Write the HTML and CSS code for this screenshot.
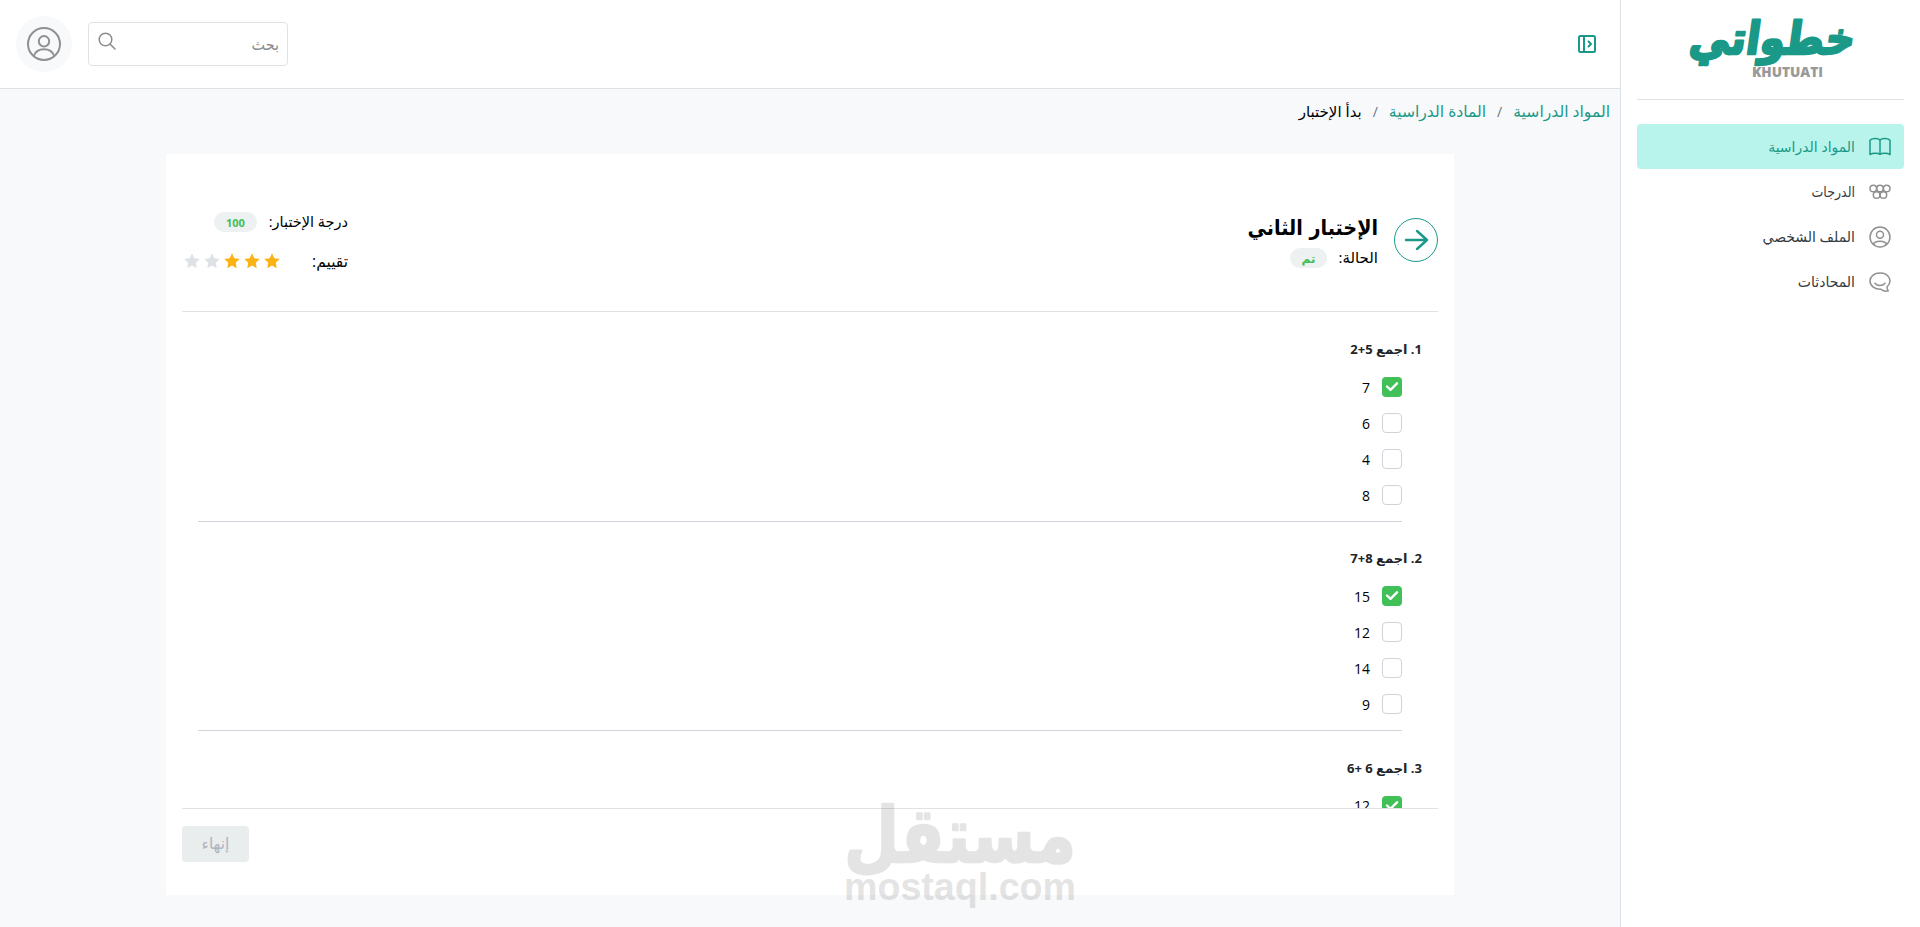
FILE: index.html
```
<!DOCTYPE html>
<html lang="ar" dir="rtl">
<head>
    <meta charset="UTF-8">
    <meta name="viewport" content="width=device-width, initial-scale=1.0">
    <title>خطواتي</title>
    <link rel="stylesheet" href="styles.css">
</head>
<body>
    <aside class="sidebar">
        <div class="brand">
            <svg class="logo" width="170" height="68" viewBox="0 0 170 68" direction="rtl">
                <text class="logo-ar" transform="translate(167 38) skewX(-8)" x="0" y="0" textLength="165" lengthAdjust="spacingAndGlyphs">خطواتي</text>
                <text class="logo-en" direction="ltr" x="66" y="61" textLength="71" lengthAdjust="spacingAndGlyphs">KHUTUATI</text>
            </svg>
        </div>
        <nav class="menu">
            <a class="menu-item active">
                <svg width="22" height="22" viewBox="0 0 22 22"><path d="M11 4.2C9.5 2.200 3.500 1.900 1 4.200V18.600C3.500 17 9 17 11 18.300C13 17 18.500 17 21 18.600V4.200C18.500 1.900 12.500 2.200 11 4.200V18.300"/></svg>
                <span>المواد الدراسية</span>
            </a>
            <a class="menu-item">
                <svg width="22" height="22" viewBox="0 0 22 22"><circle cx="4.300" cy="7.500" r="3.300"/><circle cx="11" cy="7.500" r="3.300"/><circle cx="17.700" cy="7.500" r="3.300"/><circle cx="7.600" cy="14" r="3.300"/><circle cx="14.400" cy="14" r="3.300"/></svg>
                <span class="narrow">الدرجات</span>
            </a>
            <a class="menu-item">
                <svg width="22" height="22" viewBox="0 0 22 22"><circle cx="11" cy="11" r="10"/><circle cx="11" cy="8.700" r="3.500"/><path d="M4.500 18.400C5.500 14.300 16.500 14.300 17.500 18.400"/></svg>
                <span>الملف الشخصي</span>
            </a>
            <a class="menu-item">
                <svg width="22" height="22" viewBox="0 0 22 22"><path d="M18 16C24 10 20 2 11 2C5 2 1 5.500 1 10C1 15 6 18.500 12 18.200C14 20 17 20.500 19.300 19.800C18.300 18.800 18 17.500 18 16Z"/><path d="M6 12.200C8.500 15.200 13.500 15.200 16 12.200"/></svg>
                <span>المحادثات</span>
            </a>
        </nav>
    </aside>

    <div class="page">
        <header class="topbar">
            <svg class="toggle" width="18" height="18" viewBox="0 0 18 18"><rect x="1" y="1" width="16" height="16" rx="1.500"/><path d="M6 1V17M10.500 6.500L13 9L10.500 11.500"/></svg>
            <div class="tools">
                <div class="search">
                    <span>بحث</span>
                    <svg width="18" height="18" viewBox="0 0 18 18"><circle cx="7.500" cy="7.500" r="6.300"/><path d="M12 12L17 17"/></svg>
                </div>
                <div class="avatar">
                    <svg width="34" height="34" viewBox="0 0 34 34"><circle cx="17" cy="17" r="16"/><circle cx="17" cy="14.300" r="5.200"/><path d="M7 28.500C10 20 24 20 27 28.500"/></svg>
                </div>
            </div>
        </header>

        <div class="breadcrumb">
            <a>المواد الدراسية</a>
            <i>/</i>
            <a>المادة الدراسية</a>
            <i>/</i>
            <b>بدأ الإختبار</b>
        </div>

        <main class="card">
            <div class="card-head">
                <div class="back">
                    <svg width="44" height="44" viewBox="0 0 44 44"><circle cx="22" cy="22" r="21.500"/><path d="M12 22H33M23 13L33 22L23 31"/></svg>
                </div>
                <div class="exam">
                    <h1>الإختبار الثاني</h1>
                    <div class="status"><span>الحالة:</span><em class="badge">تم</em></div>
                </div>
                <div class="result">
                    <div class="result-row"><span class="score-label">درجة الإختبار:</span><em class="badge score">100</em></div>
                    <div class="result-row">
                        <span class="rate-label">تقييم:</span>
                        <div class="stars">
                            <svg class="on" viewBox="0 0 16 16"><path d="M8 .3L10.300 5.200L15.700 5.900L11.800 9.700L12.700 15.200L8 12.600L3.300 15.200L4.200 9.700L.3 5.900L5.700 5.200Z"/></svg>
                            <svg class="on" viewBox="0 0 16 16"><path d="M8 .3L10.300 5.200L15.700 5.900L11.800 9.700L12.700 15.200L8 12.600L3.300 15.200L4.200 9.700L.3 5.900L5.700 5.200Z"/></svg>
                            <svg class="on" viewBox="0 0 16 16"><path d="M8 .3L10.300 5.200L15.700 5.900L11.800 9.700L12.700 15.200L8 12.600L3.300 15.200L4.200 9.700L.3 5.900L5.700 5.200Z"/></svg>
                            <svg viewBox="0 0 16 16"><path d="M8 .3L10.300 5.200L15.700 5.900L11.800 9.700L12.700 15.200L8 12.600L3.300 15.200L4.200 9.700L.3 5.900L5.700 5.200Z"/></svg>
                            <svg viewBox="0 0 16 16"><path d="M8 .3L10.300 5.200L15.700 5.900L11.800 9.700L12.700 15.200L8 12.600L3.300 15.200L4.200 9.700L.3 5.900L5.700 5.200Z"/></svg>
                        </div>
                    </div>
                </div>
            </div>

            <div class="questions">
                <section class="question">
                    <h2>1. اجمع 5+2</h2>
                    <ul>
                        <li><span class="box checked"><svg viewBox="0 0 20 20"><path d="M5 9.500L8.500 12.800L15 6.300"/></svg></span>7</li>
                        <li><span class="box"></span>6</li>
                        <li><span class="box"></span>4</li>
                        <li><span class="box"></span>8</li>
                    </ul>
                </section>
                <section class="question">
                    <h2>2. اجمع 8+7</h2>
                    <ul>
                        <li><span class="box checked"><svg viewBox="0 0 20 20"><path d="M5 9.500L8.500 12.800L15 6.300"/></svg></span>15</li>
                        <li><span class="box"></span>12</li>
                        <li><span class="box"></span>14</li>
                        <li><span class="box"></span>9</li>
                    </ul>
                </section>
                <section class="question">
                    <h2>3. اجمع 6 +6</h2>
                    <ul>
                        <li><span class="box checked"><svg viewBox="0 0 20 20"><path d="M5 9.500L8.500 12.800L15 6.300"/></svg></span>12</li>
                    </ul>
                </section>
            </div>

            <div class="card-foot">
                <button class="finish" disabled>إنهاء</button>
            </div>
        </main>
    </div>

    <div class="watermark">
        <svg width="240" height="115" viewBox="0 0 240 115">
            <text class="wm-ar" direction="rtl" transform="translate(236 63) scale(1 1.2)" x="0" y="0" textLength="232" lengthAdjust="spacingAndGlyphs">مستقل</text>
            <text class="wm-en" direction="ltr" x="4" y="101" textLength="232" lengthAdjust="spacingAndGlyphs">mostaql.com</text>
        </svg>
    </div>
</body>
</html>
```
FILE: styles.css
```
* {
    box-sizing: border-box;
}
body {
    margin: 0;
    height: 100vh;
    display: flex;
    overflow: hidden;
    background: #f8f9fb;
    color: #000;
    font-family: "Open Sans", "DejaVu Sans", sans-serif;
    font-size: 14px;
}
svg {
    display: block;
    flex: none;
    fill: none;
    stroke: currentColor;
    stroke-width: 1.5;
    stroke-linecap: round;
    stroke-linejoin: round;
}
span, a, h1, h2 {
    white-space: nowrap;
}

/* sidebar */
.sidebar {
    width: 300px;
    flex: none;
    padding: 0 16px;
    background: #fff;
    border-left: 1px solid #dee2e6;
}
.brand {
    height: 100px;
    padding-top: 16px;
    display: flex;
    justify-content: center;
    border-bottom: 1px solid #dee2e6;
}
.logo {
    overflow: visible;
}
.logo text {
    stroke: none;
}
.logo .logo-ar {
    font: bold 45px "DejaVu Sans", sans-serif;
    fill: #1a9988;
    stroke: #1a9988;
    stroke-width: 2.5;
}
.logo .logo-en {
    font: 800 14px "Open Sans", sans-serif;
    fill: #999;
}
.menu {
    padding-top: 24px;
}
.menu-item {
    height: 45px;
    padding: 0 13px;
    display: flex;
    align-items: center;
    gap: 14px;
    color: #343a40;
    border-radius: 4px;
}
.menu-item svg {
    color: #909090;
}
.menu-item.active,
.menu-item.active svg {
    color: #1a9988;
}
.menu-item.active {
    background: #b8f4eb;
}
.menu .narrow {
    font-family: "DejaVu Sans Condensed", sans-serif;
}

/* top bar */
.page {
    flex: 1;
    min-width: 0;
}
.topbar {
    height: 89px;
    padding: 0 24px 0 16px;
    display: flex;
    align-items: center;
    justify-content: space-between;
    background: #fff;
    border-bottom: 1px solid #dee2e6;
}
.toggle {
    color: #1a9988;
    stroke-width: 2;
}
.tools {
    display: flex;
    align-items: center;
    gap: 16px;
}
.search {
    width: 200px;
    height: 44px;
    padding: 0 8px 0 9px;
    display: flex;
    align-items: center;
    justify-content: space-between;
    border: 1px solid #dee2e6;
    border-radius: 4px;
    color: #8c8c8c;
    font-family: "DejaVu Sans Condensed", sans-serif;
    font-size: 16px;
}
.search svg {
    margin-bottom: 6px;
}
.avatar {
    width: 56px;
    height: 56px;
    display: grid;
    place-items: center;
    border-radius: 50%;
    background: #f8f9fb;
    color: #909090;
}
.avatar svg {
    stroke-width: 2;
}
.breadcrumb {
    height: 65px;
    padding: 0 10px 21px 0;
    display: flex;
    align-items: center;
    gap: 11px;
    font-size: 15.6px;
}
.breadcrumb a {
    color: #1a9988;
}
.breadcrumb i {
    color: #6c757d;
    font-style: normal;
    font-size: 14px;
}
.breadcrumb b {
    font-weight: normal;
    font-size: 15px;
}

/* exam card */
.card {
    width: 1288px;
    height: 741px;
    margin: 0 auto;
    padding: 0 16px;
    background: #fff;
}
.card-head {
    height: 158px;
    padding-top: 56px;
    display: flex;
    border-bottom: 1px solid #dee2e6;
}
.back {
    color: #1a9988;
    padding-top: 8px;
    margin-left: 16px;
}
.back path {
    stroke-width: 2.4;
}
.back circle {
    stroke-width: 1;
}
h1 {
    margin: 0;
    height: 38px;
    line-height: 35px;
    font-family: "DejaVu Sans Condensed", sans-serif;
    font-size: 21.3px;
}
.status {
    height: 20px;
    display: flex;
    align-items: center;
    gap: 11px;
    font-size: 15px;
}
.status span {
    line-height: 16px;
    padding-bottom: 3px;
}
.badge {
    height: 20px;
    padding: 0 12px;
    display: flex;
    align-items: center;
    border-radius: 10px;
    background: #edf1f1;
    color: #40c057;
    font-size: 12px;
    font-style: normal;
    font-weight: bold;
}
.badge.score {
    font-size: 11px;
}
.result {
    width: 166px;
    margin-right: auto;
}
.result-row {
    height: 20px;
    margin: 2px 0 20px;
    display: flex;
    align-items: center;
    gap: 12px;
}
.score-label,
.rate-label {
    padding-bottom: 2px;
}
.score-label {
    font-size: 14.5px;
}
.rate-label {
    font-size: 15.5px;
}
.stars {
    display: flex;
    gap: 4px;
    margin: 0 auto 2px 0;
    padding-left: 2px;
}
.stars svg {
    width: 16px;
    height: 16px;
    fill: #dee2e6;
    stroke: none;
}
.stars .on {
    fill: #fab215;
}

.questions {
    height: 496px;
    overflow: hidden;
    padding: 0 16px;
}
.question {
    height: 209.4px;
    padding-top: 25px;
}
h2 {
    margin: 0;
    height: 24px;
    line-height: 24px;
    font-size: 13px;
    color: #212529;
}
ul {
    list-style: none;
    margin: 0 20px 0 0;
    padding: 16px 0 16px;
    display: grid;
    gap: 16px;
    border-bottom: 1px solid #ced4da;
}
li {
    height: 20px;
    display: flex;
    align-items: center;
    gap: 12px;
}
.box {
    width: 20px;
    height: 20px;
    border: 1px solid #ced4da;
    border-radius: 4px;
}
.box.checked {
    border: 0;
    background: #40c057;
    color: #fff;
}
.box svg {
    stroke-width: 2.4;
}
.card-foot {
    height: 87px;
    padding-top: 17px;
    display: flex;
    justify-content: flex-end;
    border-top: 1px solid #dee2e6;
}
.finish {
    width: 67px;
    height: 36px;
    padding-bottom: 4px;
    border: 0;
    border-radius: 4px;
    background: #e9eded;
    color: #adb5bd;
    font: inherit;
    font-size: 15.5px;
}

.watermark {
    position: absolute;
    left: 840px;
    top: 799px;
    opacity: .1;
}
.watermark svg {
    overflow: visible;
}
.watermark text {
    fill: #000;
    stroke: none;
}
.watermark .wm-ar {
    font: bold 64px "DejaVu Sans", sans-serif;
    stroke: #000;
    stroke-width: 2;
}
.watermark .wm-en {
    font: bold 38px "Liberation Sans", sans-serif;
}
```
